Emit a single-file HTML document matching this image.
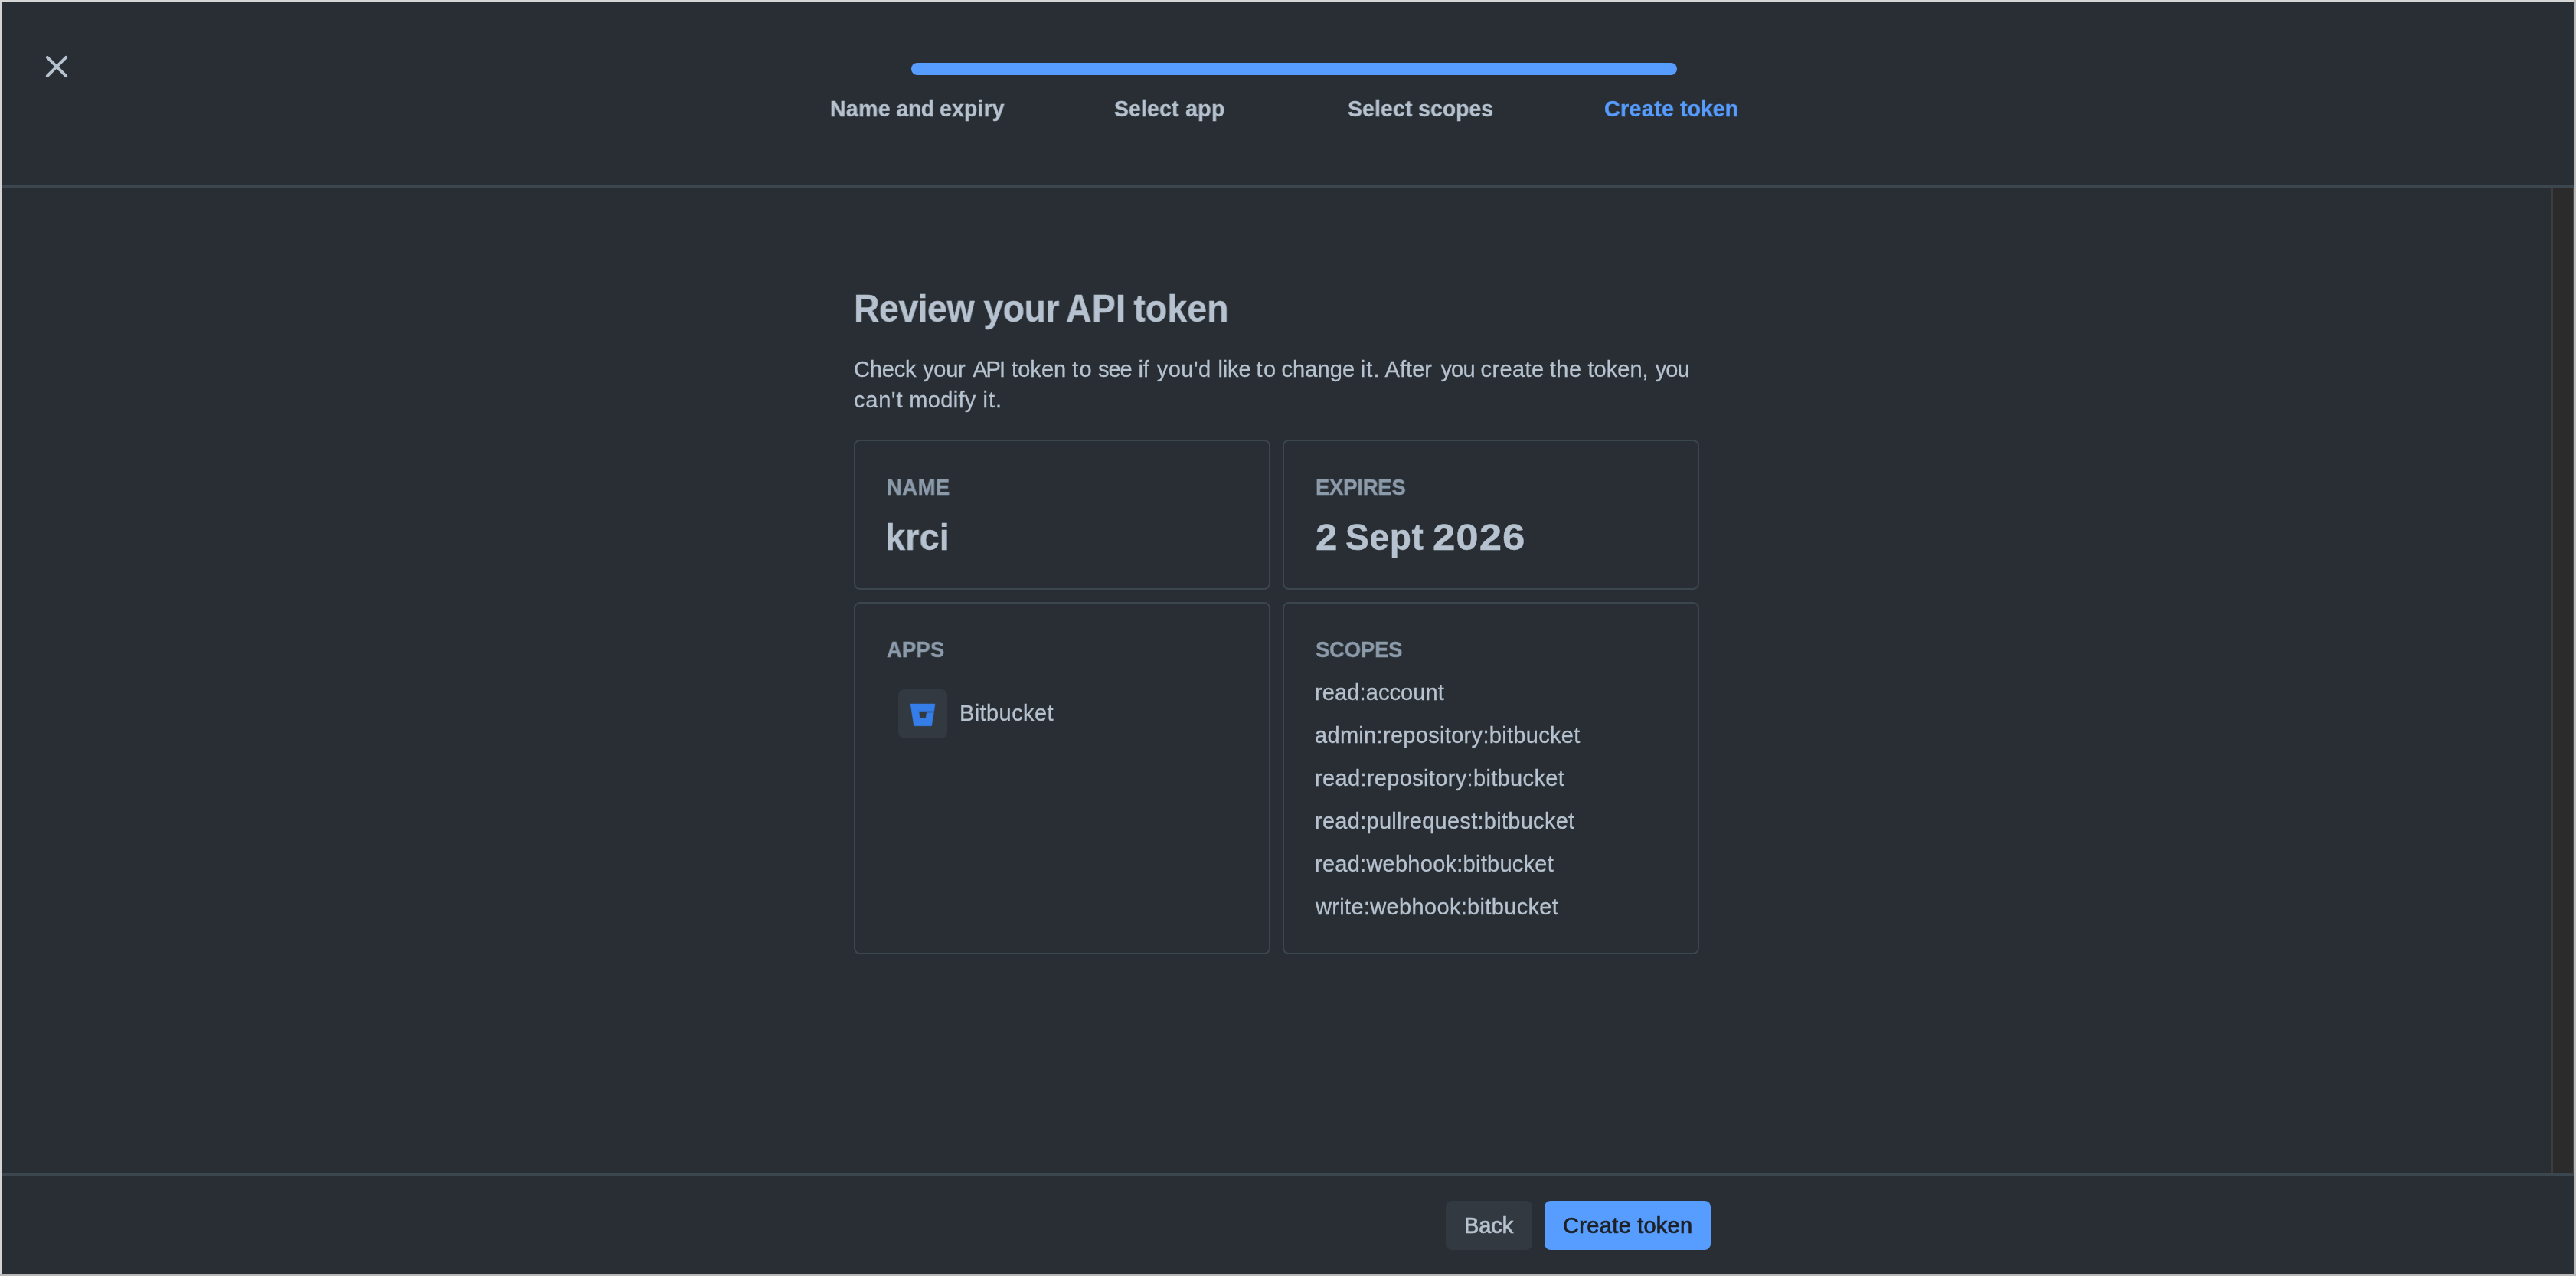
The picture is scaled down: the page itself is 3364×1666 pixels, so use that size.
<!DOCTYPE html>
<html lang="en"><head><meta charset="utf-8"><title>Create API token</title>
<style>
*{box-sizing:border-box;margin:0;padding:0}
html,body{width:3364px;height:1666px;background:#282E33}
body{position:relative;font-family:"Liberation Sans",sans-serif;color:#B6C2CF}
.a{position:absolute}
.t{position:absolute;white-space:nowrap;font-size:0;line-height:0;font-family:"Liberation Sans",sans-serif;will-change:transform;transform-origin:0 0}
.t span{display:inline-block;line-height:normal;vertical-align:baseline}
.card{position:absolute;border:2px solid #3C464F;border-radius:8px}
</style></head><body>
<div class="a" style="left:2px;top:242px;width:3360px;height:4px;background:#3C464F"></div>
<div class="a" style="left:2px;top:1532px;width:3360px;height:4px;background:#3C464F"></div>
<div class="a" style="left:3332px;top:246px;width:30px;height:1286px;background:#2B2B2B;border-left:2px solid #3D3D3D;border-right:2px solid #4A4A4A"></div>
<div class="a" style="left:0;top:0;width:3364px;height:2px;background:#D6D6D6"></div>
<div class="a" style="left:0;top:0;width:2px;height:1666px;background:#D4D4D4"></div>
<div class="a" style="left:3362px;top:0;width:2px;height:1666px;background:#BABABA"></div>
<div class="a" style="left:0;top:1664px;width:3364px;height:2px;background:#B8B8B8"></div>
<svg class="a" style="left:54px;top:67px" width="40" height="40" viewBox="54 67 40 40"><path d="M61.8 74.8 L86.2 99.2 M86.2 74.8 L61.8 99.2" stroke="#B6C2CF" stroke-width="4" stroke-linecap="round" fill="none"/></svg>
<div class="a" style="left:1190px;top:82px;width:1000px;height:16px;border-radius:8px;background:#579DFF"></div>
<div class="card" style="left:1115px;top:574px;width:544px;height:196px"></div>
<div class="card" style="left:1675px;top:574px;width:544px;height:196px"></div>
<div class="card" style="left:1115px;top:786px;width:544px;height:460px"></div>
<div class="card" style="left:1675px;top:786px;width:544px;height:460px"></div>
<div class="a" style="left:1173px;top:900px;width:64px;height:64px;border-radius:8px;background:#323940"></div>
<svg class="a" style="left:1173px;top:900px" width="64" height="64" viewBox="1173 900 64 64"><path fill="#357DE8" stroke="#357DE8" stroke-width="0.6" stroke-linejoin="round" d="M1189.1 919.1 L1220.9 919.1 L1219.7 928.4 L1199.9 928.4 L1201.0 938.1 L1208.95 938.1 L1210.3 930.4 L1219.35 930.4 L1216.5 947.7 L1193.55 947.7 Z"/></svg>
<div class="a" style="left:1888px;top:1568px;width:113px;height:64px;border-radius:8px;background:#323940"></div>
<div class="a" style="left:2017px;top:1568px;width:217px;height:64px;border-radius:8px;background:#579DFF"></div>

<div class="t" id="s1" style="left:1083.94px;top:124.90px;color:#B6C2CF;font-weight:700;-webkit-text-stroke:0.4px #B6C2CF;transform:scaleX(0.96);"><span style="font-size:29.5px;letter-spacing:0.527px;">Name</span> <span style="font-size:29.5px;letter-spacing:-0.349px;margin-left:7.61px;">and</span> <span style="font-size:29.5px;letter-spacing:0.198px;margin-left:7.60px;">expiry</span></div>
<div class="t" id="s2" style="left:1454.80px;top:124.90px;color:#B6C2CF;font-weight:700;-webkit-text-stroke:0.4px #B6C2CF;transform:scaleX(0.96);"><span style="font-size:29.5px;letter-spacing:0.186px;">Select</span> <span style="font-size:29.5px;letter-spacing:0.433px;margin-left:8.84px;">app</span></div>
<div class="t" id="s3" style="left:1759.60px;top:124.90px;color:#B6C2CF;font-weight:700;-webkit-text-stroke:0.4px #B6C2CF;transform:scaleX(0.96);"><span style="font-size:29.5px;letter-spacing:0.186px;">Select</span> <span style="font-size:29.5px;letter-spacing:0.032px;margin-left:8.05px;">scopes</span></div>
<div class="t" id="s4" style="left:2094.73px;top:124.90px;color:#579DFF;font-weight:700;-webkit-text-stroke:0.4px #579DFF;transform:scaleX(0.97);"><span style="font-size:29.5px;letter-spacing:0.390px;">Create</span> <span style="font-size:29.5px;letter-spacing:-0.033px;margin-left:7.76px;">token</span></div>
<div class="t" id="h1" style="left:1114.99px;top:374.20px;color:#B6C2CF;font-weight:700;-webkit-text-stroke:0.4px #B6C2CF;transform:scaleX(0.935);"><span style="font-size:49.5px;letter-spacing:-0.441px;">Review</span> <span style="font-size:49.5px;letter-spacing:-0.552px;margin-left:13.34px;">your</span> <span style="font-size:49.5px;letter-spacing:0.351px;margin-left:9.98px;">API</span> <span style="font-size:49.5px;letter-spacing:0.202px;margin-left:10.80px;">token</span></div>
<div class="t" id="p1" style="left:1114.90px;top:466.00px;color:#B6C2CF;font-weight:400;-webkit-text-stroke:0.3px #B6C2CF;"><span style="font-size:29px;letter-spacing:-0.150px;">Check</span> <span style="font-size:29px;letter-spacing:-0.352px;margin-left:8.75px;">your</span> <span style="font-size:29px;letter-spacing:-1.993px;margin-left:10.00px;">API</span> <span style="font-size:29px;letter-spacing:0.072px;margin-left:10.04px;">token</span> <span style="font-size:29px;letter-spacing:1.343px;margin-left:7.70px;">to</span> <span style="font-size:29px;letter-spacing:-1.014px;margin-left:7.03px;">see</span> <span style="font-size:29px;letter-spacing:-0.143px;margin-left:8.89px;">if</span> <span style="font-size:29px;letter-spacing:0.502px;margin-left:9.99px;">you'd</span> <span style="font-size:29px;letter-spacing:-0.129px;margin-left:8.77px;">like</span> <span style="font-size:29px;letter-spacing:1.543px;margin-left:7.10px;">to</span> <span style="font-size:29px;letter-spacing:0.137px;margin-left:5.63px;">change</span> <span style="font-size:29px;letter-spacing:1.100px;margin-left:7.33px;">it.</span> <span style="font-size:29px;letter-spacing:0.029px;margin-left:6.04px;">After</span> <span style="font-size:29px;letter-spacing:-0.814px;margin-left:11.41px;">you</span> <span style="font-size:29px;letter-spacing:0.386px;margin-left:7.79px;">create</span> <span style="font-size:29px;letter-spacing:0.507px;margin-left:7.39px;">the</span> <span style="font-size:29px;letter-spacing:0.032px;margin-left:7.86px;">token,</span> <span style="font-size:29px;letter-spacing:-0.864px;margin-left:9.01px;">you</span></div>
<div class="t" id="p2" style="left:1115.10px;top:506.00px;color:#B6C2CF;font-weight:400;-webkit-text-stroke:0.3px #B6C2CF;"><span style="font-size:29px;letter-spacing:0.777px;">can't</span> <span style="font-size:29px;letter-spacing:0.317px;margin-left:8.07px;">modify</span> <span style="font-size:29px;letter-spacing:1.000px;margin-left:8.98px;">it.</span></div>
<div class="t" id="l1" style="left:1157.84px;top:619.70px;color:#8C9BAB;font-weight:700;-webkit-text-stroke:0.4px #8C9BAB;transform:scaleX(0.96);"><span style="font-size:28.6px;letter-spacing:0.475px;">NAME</span></div>
<div class="t" id="v1" style="left:1155.85px;top:674.00px;color:#B6C2CF;font-weight:700;-webkit-text-stroke:0.4px #B6C2CF;transform:scaleX(0.985);"><span style="font-size:47.5px;letter-spacing:0.154px;">krci</span></div>
<div class="t" id="l2" style="left:1717.64px;top:619.70px;color:#8C9BAB;font-weight:700;-webkit-text-stroke:0.4px #8C9BAB;transform:scaleX(0.96);"><span style="font-size:28.6px;letter-spacing:-0.244px;">EXPIRES</span></div>
<div class="t" id="v2" style="left:1717.60px;top:673.80px;color:#B6C2CF;font-weight:700;-webkit-text-stroke:0.4px #B6C2CF;"><span style="font-size:48px;letter-spacing:0.000px;transform:scaleX(1.0625);transform-origin:0 0;margin-left:-0.06px;">2</span> <span style="font-size:48px;letter-spacing:0.726px;transform:scaleX(0.9600);transform-origin:0 0;margin-left:12.61px;">Sept</span> <span style="font-size:48px;letter-spacing:0.880px;transform:scaleX(1.1000);transform-origin:0 0;margin-left:6.94px;">2026</span></div>
<div class="t" id="l3" style="left:1157.50px;top:831.80px;color:#8C9BAB;font-weight:700;-webkit-text-stroke:0.4px #8C9BAB;transform:scaleX(0.96);"><span style="font-size:28.6px;letter-spacing:0.166px;">APPS</span></div>
<div class="t" id="bb" style="left:1252.60px;top:915.30px;color:#B6C2CF;font-weight:400;-webkit-text-stroke:0.3px #B6C2CF;"><span style="font-size:29px;letter-spacing:0.409px;">Bitbucket</span></div>
<div class="t" id="l4" style="left:1718.00px;top:831.80px;color:#8C9BAB;font-weight:700;-webkit-text-stroke:0.4px #8C9BAB;transform:scaleX(0.96);"><span style="font-size:28.6px;letter-spacing:-0.205px;">SCOPES</span></div>
<div class="t" id="c1" style="left:1717.30px;top:888.00px;color:#B6C2CF;font-weight:400;-webkit-text-stroke:0.3px #B6C2CF;"><span style="font-size:29px;letter-spacing:0.108px;">read:account</span></div>
<div class="t" id="c2" style="left:1717.30px;top:944.00px;color:#B6C2CF;font-weight:400;-webkit-text-stroke:0.3px #B6C2CF;"><span style="font-size:29px;letter-spacing:0.314px;">admin:repository:bitbucket</span></div>
<div class="t" id="c3" style="left:1717.30px;top:1000.00px;color:#B6C2CF;font-weight:400;-webkit-text-stroke:0.3px #B6C2CF;"><span style="font-size:29px;letter-spacing:0.342px;">read:repository:bitbucket</span></div>
<div class="t" id="c4" style="left:1717.30px;top:1056.00px;color:#B6C2CF;font-weight:400;-webkit-text-stroke:0.3px #B6C2CF;"><span style="font-size:29px;letter-spacing:0.282px;">read:pullrequest:bitbucket</span></div>
<div class="t" id="c5" style="left:1717.30px;top:1112.00px;color:#B6C2CF;font-weight:400;-webkit-text-stroke:0.3px #B6C2CF;"><span style="font-size:29px;letter-spacing:0.259px;">read:webhook:bitbucket</span></div>
<div class="t" id="c6" style="left:1718.20px;top:1168.00px;color:#B6C2CF;font-weight:400;-webkit-text-stroke:0.3px #B6C2CF;"><span style="font-size:29px;letter-spacing:0.334px;">write:webhook:bitbucket</span></div>
<div class="t" id="b1" style="left:1912.00px;top:1584.00px;color:#B6C2CF;font-weight:400;-webkit-text-stroke:0.7px #B6C2CF;"><span style="font-size:29px;letter-spacing:-0.057px;">Back</span></div>
<div class="t" id="b2" style="left:2040.90px;top:1584.00px;color:#1D2125;font-weight:400;-webkit-text-stroke:0.7px #1D2125;"><span style="font-size:29px;letter-spacing:0.377px;">Create</span> <span style="font-size:29px;letter-spacing:0.247px;margin-left:7.89px;">token</span></div>
</body></html>
